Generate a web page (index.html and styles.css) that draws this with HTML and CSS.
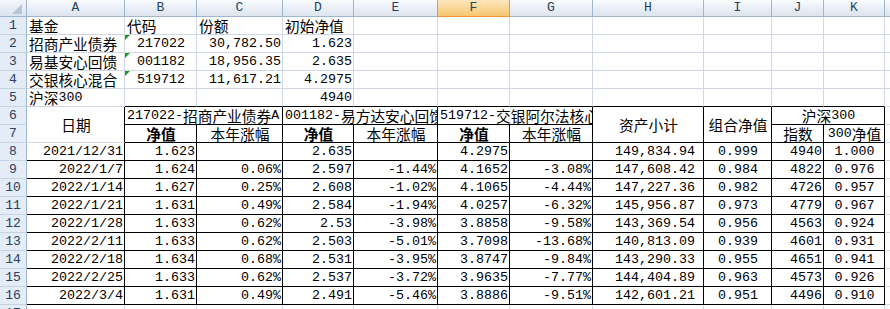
FILE: index.html
```
<!DOCTYPE html>
<html lang="zh">
<head>
<meta charset="utf-8">
<title>基金</title>
<link rel="stylesheet" href="styles.css">
</head>
<body>
<div class="sheet">
  <div class="corner"><svg width="26" height="16" viewBox="0 0 26 16"><polygon points="22,4 22,14 12,14" fill="#b7c4d6"/></svg></div>
  <div class="ch">A</div><div class="ch">B</div><div class="ch">C</div><div class="ch">D</div><div class="ch pre">E</div><div class="ch sel">F</div><div class="ch">G</div><div class="ch">H</div><div class="ch">I</div><div class="ch">J</div><div class="ch">K</div><div class="ch"></div>

  <div class="rh">1</div>
  <div class="c l"><span class="h">基金</span></div><div class="c l"><span class="h">代码</span></div><div class="c l"><span class="h">份额</span></div><div class="c l"><span class="h">初始净值</span></div>
  <div class="c"></div><div class="c"></div><div class="c"></div><div class="c"></div><div class="c"></div><div class="c"></div><div class="c"></div><div class="c"></div>

  <div class="rh">2</div>
  <div class="c l"><span class="h">招商产业债券</span></div><div class="c m t">217022</div><div class="c r">30,782.50</div><div class="c r">1.623</div>
  <div class="c"></div><div class="c"></div><div class="c"></div><div class="c"></div><div class="c"></div><div class="c"></div><div class="c"></div><div class="c"></div>

  <div class="rh">3</div>
  <div class="c l"><span class="h">易基安心回馈</span></div><div class="c m t">001182</div><div class="c r">18,956.35</div><div class="c r">2.635</div>
  <div class="c"></div><div class="c"></div><div class="c"></div><div class="c"></div><div class="c"></div><div class="c"></div><div class="c"></div><div class="c"></div>

  <div class="rh">4</div>
  <div class="c l"><span class="h">交银核心混合</span></div><div class="c m t">519712</div><div class="c r">11,617.21</div><div class="c r">4.2975</div>
  <div class="c"></div><div class="c"></div><div class="c"></div><div class="c"></div><div class="c"></div><div class="c"></div><div class="c"></div><div class="c"></div>

  <div class="rh">5</div>
  <div class="c l"><span class="h">沪深</span>300</div><div class="c kb"></div><div class="c kb"></div><div class="c kb r">4940</div>
  <div class="c kb"></div><div class="c kb"></div><div class="c kb"></div><div class="c kb"></div><div class="c kb"></div><div class="c kb"></div><div class="c kb"></div><div class="c"></div>

  <div class="rh">6</div>
  <div class="c kr m s2r"><span class="h">日期</span></div>
  <div class="c k l s2c clip">217022-<span class="h">招商产业债券</span>A</div>
  <div class="c k l s2c clip">001182-<span class="h">易方达安心回馈</span></div>
  <div class="c k l s2c clip">519712-<span class="h">交银阿尔法核心混合</span></div>
  <div class="c k m s2r"><span class="h">资产小计</span></div>
  <div class="c k m s2r"><span class="h">组合净值</span></div>
  <div class="c k m s2c"><span class="h">沪深</span>300</div>
  <div class="c"></div>

  <div class="rh">7</div>
  <div class="c k m"><span class="h b">净值</span></div><div class="c k m"><span class="h">本年涨幅</span></div>
  <div class="c k m"><span class="h b">净值</span></div><div class="c k m"><span class="h">本年涨幅</span></div>
  <div class="c k m"><span class="h b">净值</span></div><div class="c k m"><span class="h">本年涨幅</span></div>
  <div class="c k m"><span class="h">指数</span></div><div class="c k m">300<span class="h">净值</span></div>
  <div class="c"></div>

  <div class="rh">8</div>
  <div class="c k r">2021/12/31</div><div class="c k r">1.623</div><div class="c k r"></div><div class="c k r">2.635</div><div class="c k r"></div><div class="c k r">4.2975</div><div class="c k r"></div><div class="c k r acc">149,834.94</div><div class="c k m">0.999</div><div class="c k r">4940</div><div class="c k m">1.000</div><div class="c"></div>

  <div class="rh">9</div>
  <div class="c k r">2022/1/7</div><div class="c k r">1.624</div><div class="c k r">0.06%</div><div class="c k r">2.597</div><div class="c k r">-1.44%</div><div class="c k r">4.1652</div><div class="c k r">-3.08%</div><div class="c k r acc">147,608.42</div><div class="c k m">0.984</div><div class="c k r">4822</div><div class="c k m">0.976</div><div class="c"></div>

  <div class="rh">10</div>
  <div class="c k r">2022/1/14</div><div class="c k r">1.627</div><div class="c k r">0.25%</div><div class="c k r">2.608</div><div class="c k r">-1.02%</div><div class="c k r">4.1065</div><div class="c k r">-4.44%</div><div class="c k r acc">147,227.36</div><div class="c k m">0.982</div><div class="c k r">4726</div><div class="c k m">0.957</div><div class="c"></div>

  <div class="rh">11</div>
  <div class="c k r">2022/1/21</div><div class="c k r">1.631</div><div class="c k r">0.49%</div><div class="c k r">2.584</div><div class="c k r">-1.94%</div><div class="c k r">4.0257</div><div class="c k r">-6.32%</div><div class="c k r acc">145,956.87</div><div class="c k m">0.973</div><div class="c k r">4779</div><div class="c k m">0.967</div><div class="c"></div>

  <div class="rh">12</div>
  <div class="c k r">2022/1/28</div><div class="c k r">1.633</div><div class="c k r">0.62%</div><div class="c k r">2.53</div><div class="c k r">-3.98%</div><div class="c k r">3.8858</div><div class="c k r">-9.58%</div><div class="c k r acc">143,369.54</div><div class="c k m">0.956</div><div class="c k r">4563</div><div class="c k m">0.924</div><div class="c"></div>

  <div class="rh">13</div>
  <div class="c k r">2022/2/11</div><div class="c k r">1.633</div><div class="c k r">0.62%</div><div class="c k r">2.503</div><div class="c k r">-5.01%</div><div class="c k r">3.7098</div><div class="c k r">-13.68%</div><div class="c k r acc">140,813.09</div><div class="c k m">0.939</div><div class="c k r">4601</div><div class="c k m">0.931</div><div class="c"></div>

  <div class="rh">14</div>
  <div class="c k r">2022/2/18</div><div class="c k r">1.634</div><div class="c k r">0.68%</div><div class="c k r">2.531</div><div class="c k r">-3.95%</div><div class="c k r">3.8747</div><div class="c k r">-9.84%</div><div class="c k r acc">143,290.33</div><div class="c k m">0.955</div><div class="c k r">4651</div><div class="c k m">0.941</div><div class="c"></div>

  <div class="rh">15</div>
  <div class="c k r">2022/2/25</div><div class="c k r">1.633</div><div class="c k r">0.62%</div><div class="c k r">2.537</div><div class="c k r">-3.72%</div><div class="c k r">3.9635</div><div class="c k r">-7.77%</div><div class="c k r acc">144,404.89</div><div class="c k m">0.963</div><div class="c k r">4573</div><div class="c k m">0.926</div><div class="c"></div>

  <div class="rh">16</div>
  <div class="c k r">2022/3/4</div><div class="c k r">1.631</div><div class="c k r">0.49%</div><div class="c k r">2.491</div><div class="c k r">-5.46%</div><div class="c k r">3.8886</div><div class="c k r">-9.51%</div><div class="c k r acc">142,601.21</div><div class="c k m">0.951</div><div class="c k r">4496</div><div class="c k m">0.910</div><div class="c"></div>

  <div class="rh">17</div>
  <div class="c"></div><div class="c"></div><div class="c"></div><div class="c"></div><div class="c"></div><div class="c"></div><div class="c"></div><div class="c"></div><div class="c"></div><div class="c"></div><div class="c"></div><div class="c"></div>
</div>
</body>
</html>
```
FILE: styles.css
```
html, body {
  margin: 0;
  padding: 0;
  background: #ffffff;
  overflow: hidden;
}

.sheet {
  display: grid;
  grid-template-columns: 27px 98px 72px 86px 71px 84px 72px 83px 111px 68px 52px 61px 60px;
  grid-template-rows: 17px repeat(17, 18px);
  width: 945px;
  font-family: "Liberation Mono", "Noto Sans CJK SC", monospace;
  font-size: 13.33px;
  color: #000000;
}

.sheet > div {
  box-sizing: border-box;
  white-space: nowrap;
  display: flex;
  align-items: center;
  line-height: 16px;
}

.sheet > .clip {
  overflow: hidden;
}

.corner {
  background: linear-gradient(#f4f7fb, #dbe3ee);
  border-right: 1px solid #9eb6ce;
  border-bottom: 1px solid #9eb6ce;
}

.ch {
  justify-content: center;
  background: linear-gradient(#f9fbfd, #dde4ee);
  border-right: 1px solid #9eb6ce;
  border-bottom: 1px solid #9eb6ce;
  color: #27415f;
  font-family: "Liberation Mono", monospace;
  font-size: 13px;
}

.ch.pre {
  border-right-color: #f29536;
}

.ch.sel {
  background: linear-gradient(#fde7bf, #f6c66f);
  border-right-color: #f29536;
  border-bottom-color: #f29536;
}

.rh {
  justify-content: center;
  background: #e4ecf7;
  border-right: 1px solid #9eb6ce;
  border-bottom: 1px solid #c5d3e3;
  color: #27415f;
  font-family: "Liberation Mono", monospace;
  font-size: 13px;
}

.c {
  border-right: 1px solid #d0d7e5;
  border-bottom: 1px solid #d0d7e5;
  padding: 0 1px 0 2px;
}

.c.k {
  border-right-color: #000000;
  border-bottom-color: #000000;
}

.c.kr {
  border-right-color: #000000;
}

.c.kb {
  border-bottom-color: #000000;
}

.l { justify-content: flex-start; }
.r { justify-content: flex-end; }
.m { justify-content: center; }

.acc {
  padding-right: 8px;
}

.s2c { grid-column: span 2; }
.s2r { grid-row: span 2; }

.h {
  font-family: "Noto Sans CJK SC", sans-serif;
  font-size: 14.7px;
}

.b {
  font-weight: bold;
}

.t {
  position: relative;
}

.t::before {
  content: "";
  position: absolute;
  left: 0;
  top: 0;
  border-top: 5px solid #1f9a1f;
  border-right: 5px solid transparent;
}
```
